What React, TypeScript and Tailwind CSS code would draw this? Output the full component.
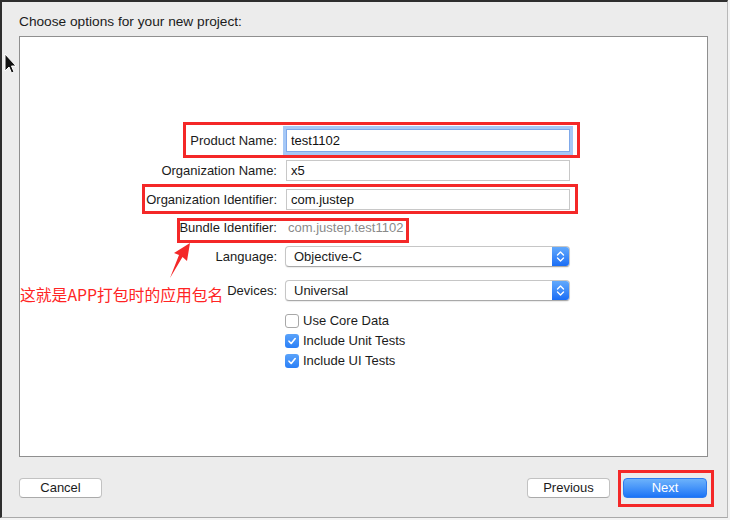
import React from 'react';

const Chevrons = () => (
  <svg width="9" height="13" viewBox="0 0 9 13" fill="none" stroke="white" strokeWidth="1.4" strokeLinecap="round" strokeLinejoin="round">
    <path d="M1.5 5 L4.5 2 L7.5 5" />
    <path d="M1.5 8 L4.5 11 L7.5 8" />
  </svg>
);

const Check = () => (
  <svg width="10" height="10" viewBox="0 0 10 10" fill="none" stroke="white" strokeWidth="1.6" strokeLinecap="round" strokeLinejoin="round">
    <path d="M2 5.2 L4.2 7.5 L8.2 2.5" />
  </svg>
);

function Row({ label, children, className = '' }: { label: string; children: React.ReactNode; className?: string }) {
  return (
    <div className={`flex items-center ${className}`}>
      <div className="w-[257px] text-right text-[13px] text-[#1b1b1b] whitespace-nowrap">{label}</div>
      <div className="ml-[9px] flex items-center">{children}</div>
    </div>
  );
}

function Popup({ value }: { value: string }) {
  return (
    <div className="w-[285px] h-[21px] flex rounded-[4px] border border-[#c6c6c6] border-b-[#a9a9a9] bg-white shadow-[0_1px_1px_rgba(0,0,0,0.08)] overflow-hidden">
      <div className="flex-1 pl-[8px] text-[13px] leading-[19px] text-[#1b1b1b]">{value}</div>
      <div className="w-[17px] flex items-center justify-center bg-gradient-to-b from-[#62a9fc] to-[#1a6df5]">
        <Chevrons />
      </div>
    </div>
  );
}

function Box({ checked, label }: { checked: boolean; label: string }) {
  return (
    <div className="h-[20px] flex items-center">
      <div className="w-[257px]" />
      <div className="ml-[8px] flex items-center">
        {checked ? (
          <div className="w-[14px] h-[14px] rounded-[3px] bg-gradient-to-b from-[#5aa3fa] to-[#2a7ff7] flex items-center justify-center">
            <Check />
          </div>
        ) : (
          <div className="w-[14px] h-[14px] rounded-[3px] border border-[#a8a8a8] bg-white" />
        )}
        <span className="ml-[4px] text-[13px] text-[#1b1b1b]">{label}</span>
      </div>
    </div>
  );
}

export default function App() {
  return (
    <div className="relative w-[730px] h-[520px] bg-[#f3f3f3] overflow-hidden font-['Liberation_Sans',Arial,sans-serif]">
      <div className="w-[728px] h-[518px] bg-[#ececec] border-t-2 border-l-2 border-[#2e2e2e] border-r border-r-[#b8b8b8] border-b border-b-[#a9a9a9] flex flex-col">
        <div className="pl-[17px] pt-[12px] h-[34px] text-[13.7px] leading-[16px] text-[#1b1b1b]">Choose options for your new project:</div>

        <div className="ml-[17px] w-[689px] h-[421px] bg-white border border-[#8f8f8f] pt-[92px]">
          <Row label="Product Name:" className="h-[23px]">
            <div className="w-[284px] h-[23px] border border-[#7fa9ea] shadow-[0_0_0_3px_#a6c8f6] bg-white pl-[4px] text-[13px] leading-[21px] text-[#111]">test1102</div>
          </Row>
          <Row label="Organization Name:" className="h-[21px] mt-[8px]">
            <div className="w-[284px] h-[21px] border border-[#c8c8c8] bg-white pl-[4px] text-[13px] leading-[19px] text-[#111]">x5</div>
          </Row>
          <Row label="Organization Identifier:" className="h-[21px] mt-[8px]">
            <div className="w-[284px] h-[21px] border border-[#c8c8c8] bg-white pl-[4px] text-[13px] leading-[19px] text-[#111]">com.justep</div>
          </Row>
          <Row label="Bundle Identifier:" className="h-[22px] mt-[7px]">
            <div className="pl-[2px] text-[13px] text-[#8a8a8a]">com.justep.test1102</div>
          </Row>
          <Row label="Language:" className="h-[21px] mt-[7px]">
            <div className="-ml-[1px]"><Popup value="Objective-C" /></div>
          </Row>
          <Row label="Devices:" className="h-[21px] mt-[13px]">
            <div className="-ml-[1px]"><Popup value="Universal" /></div>
          </Row>
          <div className="mt-[10px]">
            <Box checked={false} label="Use Core Data" />
            <Box checked label="Include Unit Tests" />
            <Box checked label="Include UI Tests" />
          </div>
        </div>

        <div className="mt-[21px] pl-[17px] pr-[20px] flex items-center">
          <button className="w-[83px] h-[20px] rounded-[4px] border border-[#c2c2c2] border-b-[#aaaaaa] bg-white text-[13px] leading-[18px] text-[#1b1b1b]">Cancel</button>
          <div className="flex-1" />
          <button className="w-[83px] h-[20px] rounded-[4px] border border-[#c2c2c2] border-b-[#aaaaaa] bg-white text-[13px] leading-[18px] text-[#1b1b1b]">Previous</button>
          <button className="ml-[13px] w-[84px] h-[20px] rounded-[4px] border border-[#2d7bf0] bg-gradient-to-b from-[#6cb2fb] to-[#1b74f6] text-[13px] leading-[18px] text-white">Next</button>
        </div>
      </div>

      {/* annotation overlays */}
      <div className="absolute left-[183px] top-[122px] w-[397px] h-[36px] border-[3px] border-[#f42828]" />
      <div className="absolute left-[142px] top-[184px] w-[436px] h-[30px] border-[3px] border-[#f42828]" />
      <div className="absolute left-[177px] top-[218px] w-[232px] h-[25px] border-[3px] border-[#f42828]" />
      <div className="absolute left-[618px] top-[470px] w-[96px] h-[37px] border-[3px] border-[#f42828]" />

      <svg className="absolute left-0 top-0" width="730" height="520" viewBox="0 0 730 520">
        <polygon points="190,243 187,261 182.5,257 170,278 179,255 174,253" fill="#f42828" />
        <polygon points="5,54 5,71 9,67 11.5,73 14,72 11.5,66 16,66" fill="#111" stroke="#fff" strokeWidth="1" />
      </svg>

      <div className="absolute left-[20px] top-[286px] text-[15.8px] leading-[18px] text-[#ff2424] font-['Noto_Sans_CJK_SC',sans-serif] whitespace-nowrap">这就是APP打包时的应用包名</div>
    </div>
  );
}
